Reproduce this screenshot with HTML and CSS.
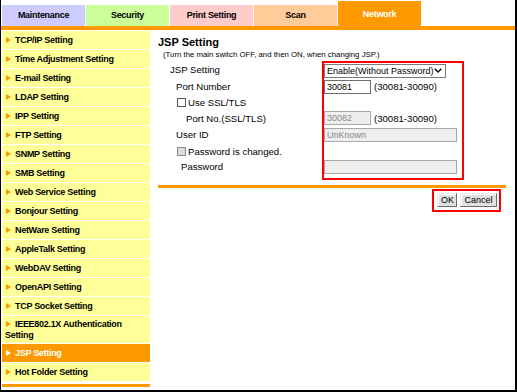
FILE: index.html
```html
<!DOCTYPE html>
<html lang="en">
<head>
  <meta charset="UTF-8" />
  <title>Network - JSP Setting</title>
  <link rel="stylesheet" href="styles.css">
</head>
<body>
  <div class="frame">
    <div class="tabs">
      <div class="tab tab-maint">Maintenance</div>
      <div class="tab tab-security">Security</div>
      <div class="tab tab-print">Print Setting</div>
      <div class="tab tab-scan">Scan</div>
      <div class="tab tab-network">Network</div>
    </div>
    <div class="tab-line"></div>

    <div class="content">
      <div class="side">
        <ul class="side-menu">
          <li><span class="arrow"></span>TCP/IP Setting</li>
          <li><span class="arrow"></span>Time Adjustment Setting</li>
          <li><span class="arrow"></span>E-mail Setting</li>
          <li><span class="arrow"></span>LDAP Setting</li>
          <li><span class="arrow"></span>IPP Setting</li>
          <li><span class="arrow"></span>FTP Setting</li>
          <li><span class="arrow"></span>SNMP Setting</li>
          <li><span class="arrow"></span>SMB Setting</li>
          <li><span class="arrow"></span>Web Service Setting</li>
          <li><span class="arrow"></span>Bonjour Setting</li>
          <li><span class="arrow"></span>NetWare Setting</li>
          <li><span class="arrow"></span>AppleTalk Setting</li>
          <li><span class="arrow"></span>WebDAV Setting</li>
          <li><span class="arrow"></span>OpenAPI Setting</li>
          <li><span class="arrow"></span>TCP Socket Setting</li>
          <li class="two-line"><span class="arrow"></span>IEEE802.1X Authentication Setting</li>
          <li class="current"><span class="arrow"></span>JSP Setting</li>
          <li><span class="arrow"></span>Hot Folder Setting</li>
        </ul>
        <div class="side-end"></div>
      </div>

      <div class="main">
        <h2>JSP Setting</h2>
        <p class="note">(Turn the main switch OFF, and then ON, when changing JSP.)</p>

        <div class="form">
          <div class="labels">
            <div class="row row-tall">JSP Setting</div>
            <div class="row row-tall ind-1">Port Number</div>
            <div class="row row-short ind-2"><span class="check"></span>Use SSL/TLS</div>
            <div class="row row-mid ind-3">Port No.(SSL/TLS)</div>
            <div class="row row-tall ind-1">User ID</div>
            <div class="row row-mid ind-2"><span class="check off"></span>Password is changed.</div>
            <div class="row row-short ind-4">Password</div>
          </div>

          <div class="values">
            <div class="row row-short">
              <div class="select">
                <span>Enable(Without Password)</span>
                <svg width="8" height="5" viewBox="0 0 8 5"><polyline points="0.7,0.7 4,4 7.3,0.7" fill="none" stroke="#000" stroke-width="1.3"/></svg>
              </div>
            </div>
            <div class="row row-tall">
              <input class="field short" type="text" value="30081">
              <span class="range">(30081-30090)</span>
            </div>
            <div class="row row-short"></div>
            <div class="row row-mid">
              <input class="field short" type="text" value="30082" disabled>
              <span class="range">(30081-30090)</span>
            </div>
            <div class="row row-tall">
              <input class="field wide" type="text" value="UnKnown" disabled>
            </div>
            <div class="row row-mid"></div>
            <div class="row row-short">
              <input class="field wide" type="password" value="" disabled>
            </div>
          </div>
        </div>

        <div class="rule"></div>
        <div class="actions">
          <div class="btn-box">
            <button>OK</button>
            <button>Cancel</button>
          </div>
        </div>
      </div>
    </div>
  </div>
</body>
</html>
```

FILE: styles.css
```css
* { box-sizing: border-box; margin: 0; padding: 0; }
body { background: #fff; font-family: 'Liberation Sans', Arial, sans-serif; color: #000; }

.frame {
  width: 517px; height: 392px;
  border-left: 1px solid #000; border-right: 2px solid #000; border-bottom: 2px solid #000;
}

/* top tabs */
.tabs { display: flex; align-items: flex-end; gap: 1px; height: 26px; padding-left: 1px; }
.tab {
  width: 83px; height: 21px; line-height: 21px; text-align: center;
  font-size: 9px; font-weight: bold; letter-spacing: -0.3px;
}
.tab-maint { background: #ccccff; }
.tab-security { background: #ccff99; }
.tab-print { background: #ffcccc; }
.tab-scan { background: #ffcc99; }
.tab-network { background: #ff9900; color: #fff; height: 25px; padding-top: 3px; }
.tab-line { height: 4px; background: #ff9900; }

.content { display: flex; }

/* left menu */
.side { width: 148px; margin-left: 1px; padding-top: 1px; }
.side-menu { list-style: none; }
.side-menu li {
  background: #ffff99; height: 19px; line-height: 18px; padding-left: 3px;
  border-bottom: 1px solid #fff;
  font-size: 9px; font-weight: bold; letter-spacing: -0.3px;
}
.side-menu li.two-line { height: 28px; line-height: 11px; padding-top: 3px; }
.side-menu li.current { background: #ff9900; color: #fff; }
.arrow {
  display: inline-block; width: 0; height: 0; vertical-align: 0;
  border-left: 5px solid #ff9900; border-top: 3px solid transparent; border-bottom: 3px solid transparent;
  margin: 0 4px 0 1px;
}
.current .arrow { border-left-color: #fff; }
.side-end { height: 3px; background: #ff9900; margin-top: 2px; }

/* main area */
.main { flex: 1; padding: 5px 9px 0 8px; }
h2 { font-size: 11px; line-height: 14px; font-weight: bold; }
.note { font-size: 7.8px; line-height: 11px; margin-left: 5px; }

.form { display: flex; margin: 1px 0 0 12px; font-size: 9.6px; }
.labels { width: 152px; }
.values { width: 142px; border: 2px solid #ff0000; padding-bottom: 4px; }

.row { display: flex; align-items: center; }
.row-tall { height: 17px; }
.row-mid { height: 16px; }
.row-short { height: 15px; }
.ind-1 { padding-left: 6px; }
.ind-2 { padding-left: 7px; }
.ind-3 { padding-left: 16px; }
.ind-4 { padding-left: 11px; }

.check { width: 9px; height: 9px; border: 1px solid #555; background: #fff; margin-right: 2px; }
.check.off { border-color: #8a8a8a; background: #dcdcdc; }

.select {
  display: flex; align-items: center; justify-content: space-between;
  width: 122px; height: 14px; padding: 0 3px 0 2px;
  border: 1px solid #7a7a7a; background: #fff; font-size: 9px;
}
.field {
  height: 14px; padding: 0 2px; border: 1px solid #6e6e6e; background: #fff;
  font-family: inherit; font-size: 9px; color: #000; outline: none;
}
.field:disabled { background: #eeeeee; border-color: #a8a8a8; color: #8a8a8a; }
.field.short { width: 47px; }
.field.wide { width: 133px; }
.range { margin-left: 3px; }

.rule { height: 3px; background: #ff9900; margin-top: 5px; }
.actions { display: flex; justify-content: flex-end; margin: 1px 5px 0 0; }
.btn-box { display: flex; gap: 3px; border: 2px solid #ff0000; padding: 2px 2px 3px 3px; }
.btn-box button {
  height: 14px; padding: 0 3px; font-family: inherit; font-size: 9px; color: #000;
  background: #e1e1e1; border: 1px solid; border-color: #e8e8e8 #6a6a6a #6a6a6a #e8e8e8;
  box-shadow: inset 1px 1px #fff;
}
.btn-box button:first-child { width: 20px; }
.btn-box button:last-child { width: 37px; }
```
